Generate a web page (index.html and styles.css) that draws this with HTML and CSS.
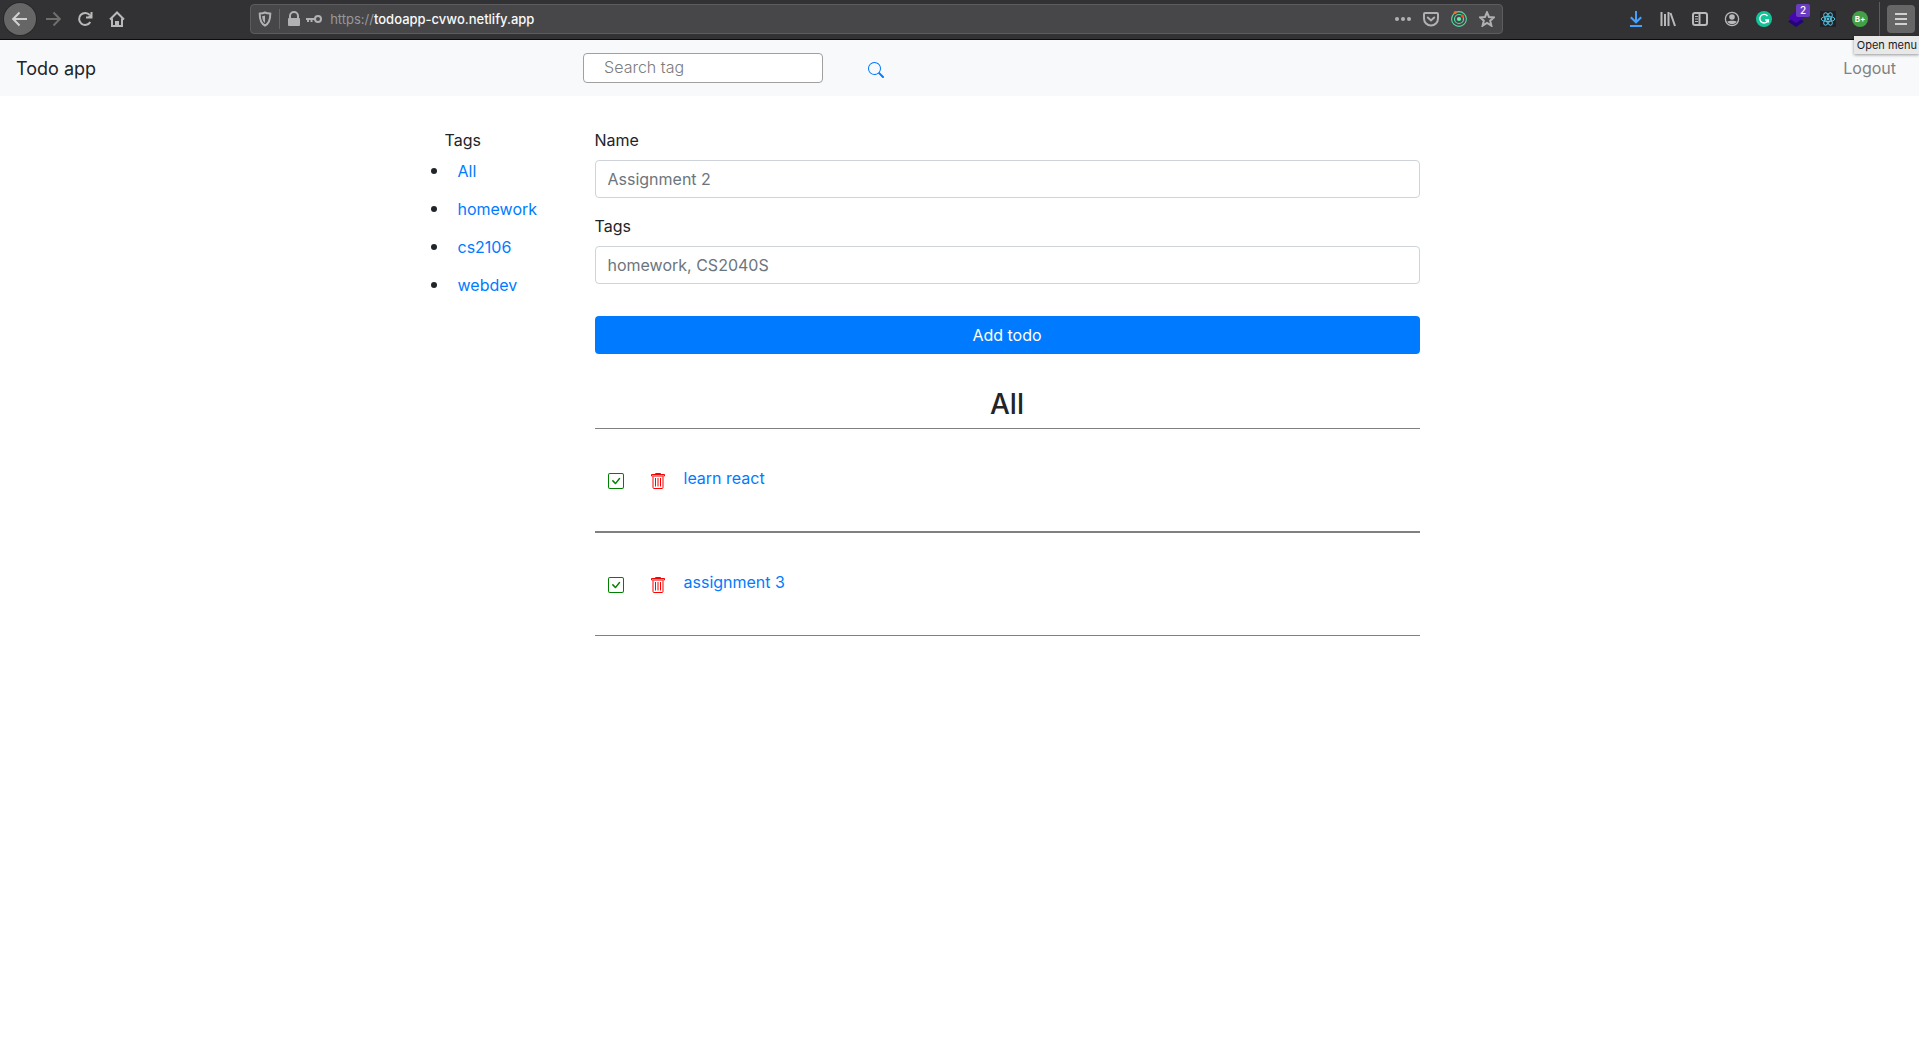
FILE: index.html
```html
<!DOCTYPE html>
<html lang="en">
<head>
<meta charset="utf-8">
<title>Todo app</title>
<link rel="stylesheet" href="styles.css">
</head>
<body>
<div class="toolbar">
  <button class="tool tool-back" aria-label="Back"><svg width="16" height="16" viewBox="0 0 16 16" class="line"><path d="M15 8H1.5M7.500 1.500L1.200 8l6.300 6.500"/></svg></button>
  <button class="tool tool-dim" aria-label="Forward"><svg width="16" height="16" viewBox="0 0 16 16" class="line"><path d="M1 8h13.500M8.500 1.500L14.800 8l-6.300 6.500"/></svg></button>
  <button class="tool" aria-label="Reload"><svg width="16" height="16" viewBox="0 0 16 16" class="line"><path d="M12.800 4.200A6 6 0 1 0 13.300 11"/><path d="M14.500 1v5.500H9" /><path d="M14.500 2.500v4h-4z" fill="currentColor" stroke="none"/></svg></button>
  <button class="tool" aria-label="Home"><svg width="16" height="16" viewBox="0 0 16 16" class="line"><path d="M1 8.500L8 1.500l7 7M3 7.500V15h10V7.500"/><path d="M6 15v-5h4v5z" fill="currentColor" stroke="none"/></svg></button>
  <span class="spacer"></span>
  <div class="urlbar">
    <button class="urlicon shield" aria-label="Tracking protection"><svg width="16" height="16" viewBox="0 0 16 16" class="line"><path d="M8 1.500c2 .9 3.800 1 5.300 1.100C13.300 8.500 12.500 12.500 8 14.700 3.500 12.500 2.700 8.500 2.700 2.600 4.200 2.500 6 2.400 8 1.500z"/><path d="M8 4.500v7.500C6 10.500 5.300 8.500 5.200 5.100 6.200 5 7 4.900 8 4.500z" fill="currentColor" stroke="none"/></svg></button>
    <button class="urlicon" aria-label="Connection secure"><svg width="16" height="16" viewBox="0 0 16 16"><path d="M4 8V5a4 4 0 0 1 8 0v3" fill="none" stroke="currentColor" stroke-width="2"/><rect x="2" y="7" width="12" height="8" rx="1" fill="currentColor"/></svg></button>
    <button class="urlicon" aria-label="Saved login"><svg width="16" height="16" viewBox="0 0 16 16" class="line"><circle cx="12" cy="8" r="3"/><path d="M9 8H0M2 8v3M5.500 8v3"/></svg></button>
    <div class="url" role="textbox" aria-label="Address">https://<span class="host">todoapp-cvwo.netlify.app</span></div>
    <div class="urlactions">
      <button class="urlicon" aria-label="Page actions"><svg width="16" height="16" viewBox="0 0 16 16" fill="currentColor"><circle cx="2" cy="8" r="2"/><circle cx="8" cy="8" r="2"/><circle cx="14" cy="8" r="2"/></svg></button>
      <button class="urlicon" aria-label="Save to Pocket"><svg width="16" height="16" viewBox="0 0 16 16" class="line"><path d="M2 2h12a1 1 0 0 1 1 1v4.500a7 7 0 0 1-14 0V3a1 1 0 0 1 1-1z"/><path d="M4.800 6.500L8 9.500l3.200-3" stroke-linecap="round"/></svg></button>
      <button class="urlicon" aria-label="Extension"><svg width="16" height="16" viewBox="0 0 16 16" fill="none" stroke="#55dba0"><circle cx="8" cy="8" r="7.400" stroke-width="1.100"/><circle cx="8" cy="8" r="4.500" stroke-width="1.200"/><circle cx="8" cy="8" r="2.100" fill="#62edae" stroke="none"/><circle cx="4.200" cy="1.600" r="1.500" fill="#f86b25" stroke="none"/><circle cx="11.500" cy="5" r="1.500" fill="#f84b25" stroke="none"/></svg></button>
      <button class="urlicon" aria-label="Bookmark"><svg width="16" height="16" viewBox="0 0 16 16" class="line"><path d="M8 1.300l2 4.700 5 .4-3.800 3.300 1.200 5L8 12l-4.400 2.700 1.200-5L1 6.400 6 6z"/></svg></button>
    </div>
  </div>
  <span class="spacer"></span>
  <button class="tool tool-blue" aria-label="Downloads"><svg width="16" height="16" viewBox="0 0 16 16" class="line"><path d="M8 0v11M2.800 6.200L8 11.300l5.200-5.100M2 15h12"/></svg></button>
  <button class="tool" aria-label="Library"><svg width="16" height="16" viewBox="0 0 16 16" class="line"><path d="M1.500 1v14M5 3v12M8.500 1v14M10.500 2L15 15"/></svg></button>
  <button class="tool" aria-label="Sidebars"><svg width="16" height="16" viewBox="0 0 16 16" class="line"><rect x="1" y="2" width="14" height="12" rx="2"/><path d="M7.500 2v12"/><path d="M3 5.500h3M3 8h3M3 10.500h3" stroke-width="1"/></svg></button>
  <button class="tool" aria-label="Account"><svg width="16" height="16" viewBox="0 0 16 16"><circle cx="8" cy="8" r="6.600" fill="none" stroke="currentColor" stroke-width="1.300"/><circle cx="8" cy="6" r="2.800" fill="currentColor"/><path d="M3.300 10.500C5 9.500 11 9.500 12.700 10.500 11 14 5 14 3.300 10.500z" fill="currentColor"/></svg></button>
  <button class="tool" aria-label="Grammarly"><svg width="16" height="16" viewBox="0 0 16 16"><circle cx="8" cy="8" r="8" fill="#15c39a"/><path d="M11.500 5A4.300 4.300 0 1 0 12.200 9H9.200M12.300 8.500v3" fill="none" stroke="#fff" stroke-width="1.400"/></svg></button>
  <button class="tool" aria-label="Layers, 2 items"><svg width="16" height="16" viewBox="0 0 16 16"><path d="M8 5l8 5.500L8 16 0 10.500z" fill="#23057a"/><path d="M8 0l8 6.500L8 12 0 6.500z" fill="#4608ad"/></svg><span class="badge">2</span></button>
  <button class="tool" aria-label="React tools"><svg width="16" height="16" viewBox="0 0 16 16"><rect width="16" height="16" fill="#202226"/><g fill="none" stroke="#53c1de"><ellipse cx="8" cy="8" rx="6.800" ry="2.600"/><ellipse cx="8" cy="8" rx="6.800" ry="2.600" transform="rotate(60 8 8)"/><ellipse cx="8" cy="8" rx="6.800" ry="2.600" transform="rotate(120 8 8)"/></g><circle cx="8" cy="8" r="1.400" fill="#53c1de"/></svg></button>
  <button class="tool" aria-label="B plus"><span class="bplus">B+</span></button>
  <div class="menuwrap">
    <button class="menu" aria-label="Open menu"><svg width="16" height="16" viewBox="0 0 16 16" class="line"><path d="M2 3h12M2 8h12M2 13h12"/></svg></button>
    <span class="tooltip" role="tooltip">Open menu</span>
  </div>
</div>

<nav class="navbar">
  <div class="brandcol"><a class="brand" href="#">Todo app</a></div>
  <form class="search">
    <input class="searchbox" type="text" placeholder="Search tag" aria-label="Search tag">
    <button class="iconbtn blue" type="button" aria-label="Search"><svg width="16" height="16" viewBox="0 0 16 16" fill="currentColor"><path d="M11.742 10.344a6.500 6.500 0 1 0-1.397 1.398h-.001c.03.04.062.078.098.115l3.850 3.850a1 1 0 0 0 1.415-1.414l-3.850-3.850a1.007 1.007 0 0 0-.115-.1zM12 6.500a5.500 5.500 0 1 1-11 0 5.500 5.500 0 0 1 11 0z"/></svg></button>
  </form>
  <a class="logout" href="#">Logout</a>
</nav>

<div class="container">
  <aside class="side">
    <div class="sidetitle">Tags</div>
    <ul class="tags">
      <li><a href="#">All</a></li>
      <li><a href="#">homework</a></li>
      <li><a href="#">cs2106</a></li>
      <li><a href="#">webdev</a></li>
    </ul>
  </aside>
  <main class="content">
    <form class="form">
      <div class="field"><label for="name">Name</label><input id="name" type="text" placeholder="Assignment 2"></div>
      <div class="field"><label for="tags">Tags</label><input id="tags" type="text" placeholder="homework, CS2040S"></div>
      <button class="submit" type="button">Add todo</button>
    </form>
    <h3 class="heading">All</h3>
    <div class="todo">
      <button class="iconbtn green" aria-label="Complete"><svg width="16" height="16" viewBox="0 0 16 16" fill="currentColor" fill-rule="evenodd"><path d="M14 1H2a1 1 0 0 0-1 1v12a1 1 0 0 0 1 1h12a1 1 0 0 0 1-1V2a1 1 0 0 0-1-1zM2 0a2 2 0 0 0-2 2v12a2 2 0 0 0 2 2h12a2 2 0 0 0 2-2V2a2 2 0 0 0-2-2H2z"/><path d="M10.970 4.970a.75.75 0 0 1 1.071 1.050l-3.992 4.990a.75.75 0 0 1-1.080.020L4.324 8.384a.75.75 0 1 1 1.060-1.060l2.094 2.093 3.473-4.425a.235.235 0 0 1 .02-.022z"/></svg></button>
      <button class="iconbtn red" aria-label="Delete"><svg width="16" height="16" viewBox="0 0 16 16" fill="none" stroke="currentColor"><path d="M1.500 1.500h13v1.500h-13zM5.500 1.500v-1h5v1M3 3.500v11a1 1 0 0 0 1 1h8a1 1 0 0 0 1-1v-11M5.500 5v8.500M8 5v8.500M10.500 5v8.500"/></svg></button>
      <a href="#">learn react</a>
    </div>
    <div class="todo">
      <button class="iconbtn green" aria-label="Complete"><svg width="16" height="16" viewBox="0 0 16 16" fill="currentColor" fill-rule="evenodd"><path d="M14 1H2a1 1 0 0 0-1 1v12a1 1 0 0 0 1 1h12a1 1 0 0 0 1-1V2a1 1 0 0 0-1-1zM2 0a2 2 0 0 0-2 2v12a2 2 0 0 0 2 2h12a2 2 0 0 0 2-2V2a2 2 0 0 0-2-2H2z"/><path d="M10.970 4.970a.75.75 0 0 1 1.071 1.050l-3.992 4.990a.75.75 0 0 1-1.080.020L4.324 8.384a.75.75 0 1 1 1.060-1.060l2.094 2.093 3.473-4.425a.235.235 0 0 1 .02-.022z"/></svg></button>
      <button class="iconbtn red" aria-label="Delete"><svg width="16" height="16" viewBox="0 0 16 16" fill="none" stroke="currentColor"><path d="M1.500 1.500h13v1.500h-13zM5.500 1.500v-1h5v1M3 3.500v11a1 1 0 0 0 1 1h8a1 1 0 0 0 1-1v-11M5.500 5v8.500M8 5v8.500M10.500 5v8.500"/></svg></button>
      <a href="#">assignment 3</a>
    </div>
  </main>
</div>
</body>
</html>
```
FILE: styles.css
```css
*, *::before, *::after { box-sizing: border-box; }

body {
  margin: 0;
  background: #fff;
  color: #212529;
  font-family: Inter, "Liberation Sans", sans-serif;
  font-size: 16px;
  line-height: 24px;
}

a { color: #007bff; text-decoration: none; }
button, input { font: inherit; }
button { margin: 0; padding: 0; border: 0; background: none; color: inherit; }
svg { display: block; flex: none; }
.line { fill: none; stroke: currentColor; stroke-width: 2; }

/* Browser toolbar */
.toolbar {
  display: flex;
  align-items: center;
  height: 40px;
  padding: 0 4px 2px;
  background: #323234;
  border-bottom: 1px solid #0c0c0d;
  color: #b9b9ba;
}
.tool {
  position: relative;
  display: flex;
  align-items: center;
  justify-content: center;
  flex: none;
  width: 32px;
  height: 32px;
}
.tool-back { margin-right: 1px; background: #666667; border-radius: 50%; box-shadow: 0 0 0 1px #29292a; color: #d0d0d0; }
.tool-dim { color: #6e6e6f; }
.tool-blue { color: #45a1ff; }
.spacer { flex: 117 1 0; }
.urlbar {
  display: flex;
  align-items: center;
  flex: 1239 1 0;
  min-width: 0;
  height: 30px;
  padding: 0 5px;
  background: #474749;
  border: 1px solid #5c5c5e;
  border-radius: 4px;
  color: #b1b1b3;
}
.urlicon { flex: none; padding: 0 2px; }
.shield { padding: 2px 6px 2px 0; margin: 0 4px 0 1px; border-right: 1px solid #656568; }
.url {
  flex: 1;
  min-width: 0;
  padding-left: 6px;
  font-size: 13px;
  white-space: nowrap;
  color: #98989b;
}
.host { color: #f9f9fa; font-weight: 500; }
.urlactions { display: flex; gap: 8px; }
.badge {
  position: absolute;
  top: 1px;
  right: 2px;
  width: 14px;
  height: 13px;
  border-radius: 2px;
  background: #6a3cc0;
  color: #fff;
  font-size: 10px;
  font-weight: 500;
  line-height: 13px;
}
.bplus {
  width: 16px;
  height: 16px;
  border-radius: 50%;
  background: #43a047;
  color: #fff;
  font-size: 8px;
  font-weight: 700;
  line-height: 16px;
}
.menuwrap {
  position: relative;
  margin-left: 3px;
  padding-left: 7px;
  border-left: 1px solid #5c5c5e;
}
.menu {
  display: flex;
  align-items: center;
  justify-content: center;
  width: 28px;
  height: 28px;
  margin: 3px 0;
  border-radius: 4px;
  background: #666667;
  color: #d0d0d0;
}
.tooltip {
  position: absolute;
  z-index: 1;
  top: 34px;
  right: -4px;
  padding: 0 2px 0 3px;
  background: #e8e8e8;
  box-shadow: 0 1px 3px rgba(0, 0, 0, .4);
  color: #1a1a1a;
  font-size: 11px;
  line-height: 18px;
  white-space: nowrap;
}

/* App header */
.navbar {
  display: flex;
  align-items: center;
  height: 56px;
  padding: 0 16px;
  background: #f8f9fa;
}
.brandcol { flex: 0 0 30%; padding-top: 2px; }
.brand { color: #212529; font-size: 18px; }
.search { display: flex; align-items: center; margin-left: 1px; }
.searchbox {
  width: 240px;
  height: 30px;
  margin-right: 32px;
  padding: 0 20px 2px;
  border: 1px solid #a0a0a0;
  border-radius: 4px;
  background: #fff;
  font-weight: 300;
}
.searchbox::placeholder { color: #7c7c7c; opacity: 1; }
.logout { margin-left: auto; padding-right: 7px; color: #808182; }

.iconbtn { padding: 0 13px 1px; }
.search .iconbtn { padding-top: 5px; }
.blue { color: #007bff; }
.green { color: #008000; }
.red { color: #f00; }

/* Page body */
.container {
  display: grid;
  grid-template-columns: 2fr 9fr 1fr;
  max-width: 1140px;
  margin: 0 auto;
  padding-top: 32px;
}
.side { padding: 0 15px 0 55px; }
.tags { margin: 0; padding: 0 0 0 5px; }
.tags li { height: 38px; padding-left: 8px; line-height: 36px; }
.tags li::marker { font-size: 20px; }
.content { padding: 0 15px; }
.form { display: flex; flex-direction: column; gap: 16px; }
.field { display: flex; flex-direction: column; gap: 8px; }
.field input {
  height: 38px;
  padding: 0 12px;
  border: 1px solid #ced4da;
  border-radius: 4px;
}
.field input::placeholder { color: #6c757d; opacity: 1; }
.submit {
  height: 38px;
  margin-top: 16px;
  border-radius: 4px;
  background: #007bff;
  color: #fff;
}
.heading {
  margin: 32px 0 6px;
  font-size: 28px;
  font-weight: 500;
  line-height: 36px;
  text-align: center;
}
.todo {
  display: flex;
  align-items: flex-end;
  padding: 37px 0 41px;
  border: solid #808080;
  border-width: 1px 0;
}
.todo a { padding-left: 5px; }
```
